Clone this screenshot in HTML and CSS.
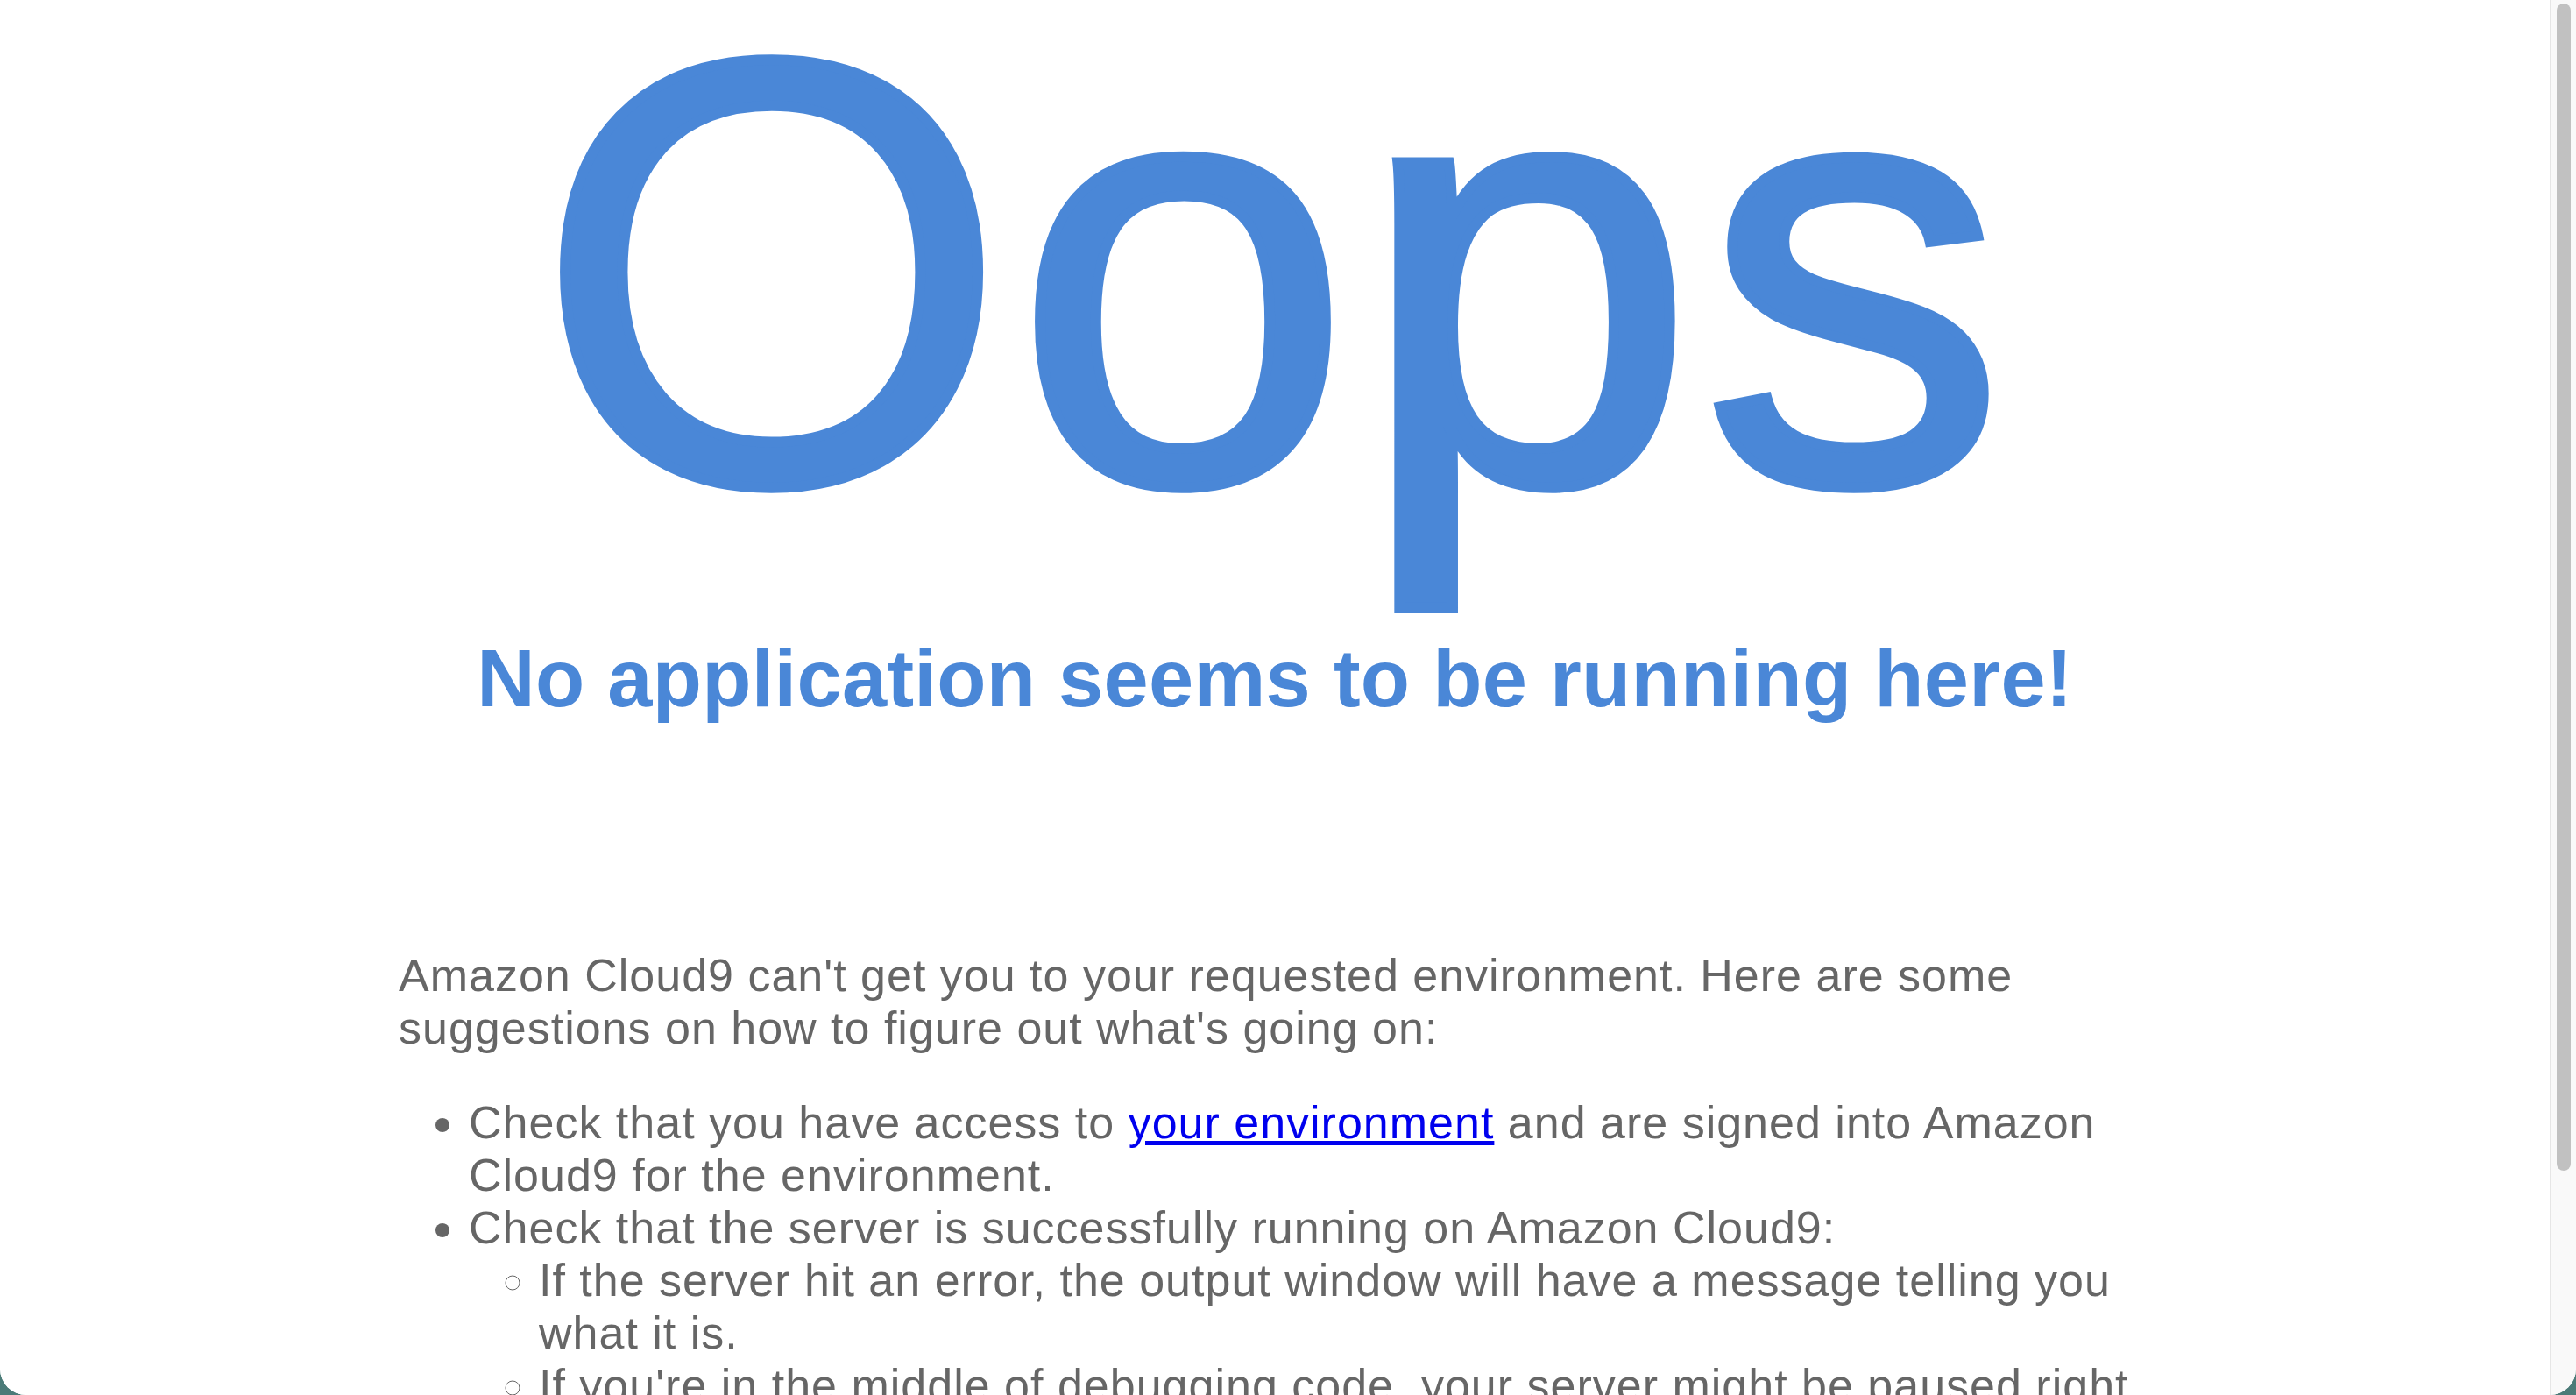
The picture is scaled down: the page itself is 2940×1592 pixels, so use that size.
FILE: index.html
```html
<!DOCTYPE html>
<html lang="en">
<head>
<meta charset="utf-8">
<title>Oops</title>
<link rel="stylesheet" href="styles.css">
</head>
<body>
<div class="window">
  <main class="page">
    <div class="container">
      <h1 class="oops">Oops</h1>
      <h2 class="subtitle">No application seems to be running here!</h2>
      <p class="intro">Amazon Cloud9 can't get you to your requested environment. Here are some suggestions on how to figure out what's going on:</p>
      <ul class="tips">
        <li>Check that you have access to <a href="#" class="link">your environment</a> and are signed into Amazon Cloud9 for the environment.</li>
        <li>Check that the server is successfully running on Amazon Cloud9:
          <ul class="subtips">
            <li>If the server hit an error, the output window will have a message telling you what it is.</li>
            <li>If you're in the middle of debugging code, your server might be paused right now.</li>
          </ul>
        </li>
        <li>Check that the server is listening on port 8080, 8081, or 8082 and IP 127.0.0.1.</li>
      </ul>
    </div>
  </main>
  <div class="scrollbar"><div class="thumb"></div></div>
</div>
</body>
</html>
```

FILE: styles.css
```css
html, body {
  margin: 0;
  padding: 0;
}
body {
  background: #4b7b78;
  font-family: "Liberation Sans", Arial, sans-serif;
}
.window {
  display: flex;
  height: 1592px;
  background: #ffffff;
  border-radius: 0 0 30px 30px;
  overflow: hidden;
}
.page {
  flex: 1;
  overflow: hidden;
  background: #ffffff;
}
.container {
  width: 2000px;
  margin: 0 auto;
}
.oops {
  margin: 0;
  padding-top: 18px;
  font-size: 690px;
  font-weight: normal;
  line-height: 0.85;
  letter-spacing: 9px;
  color: #4a87d7;
  -webkit-text-stroke: 12px #4a87d7;
  text-align: center;
}
.subtitle {
  margin: 117px 0 0;
  font-size: 92px;
  font-weight: bold;
  line-height: 1.15;
  letter-spacing: 0.3px;
  color: #4a87d7;
  text-align: center;
  white-space: nowrap;
}
.intro {
  margin: 256px 0 48px;
  font-size: 52px;
  line-height: 60px;
  letter-spacing: 1px;
  color: #666666;
}
.tips {
  margin: 48px 0 0;
  padding-left: 80px;
  font-size: 52px;
  line-height: 60px;
  letter-spacing: 1px;
  color: #666666;
}
.subtips {
  margin: 0;
  padding-left: 80px;
  list-style: circle;
}
.link {
  color: #0000ee;
}
.scrollbar {
  width: 16px;
  flex: none;
  border-left: 1px solid #e6e6e6;
  background: #f9f9f9;
  padding: 4px 6px 0 7px;
}
.thumb {
  height: 1332px;
  background: #c1c1c1;
  border-radius: 8px;
}
```
